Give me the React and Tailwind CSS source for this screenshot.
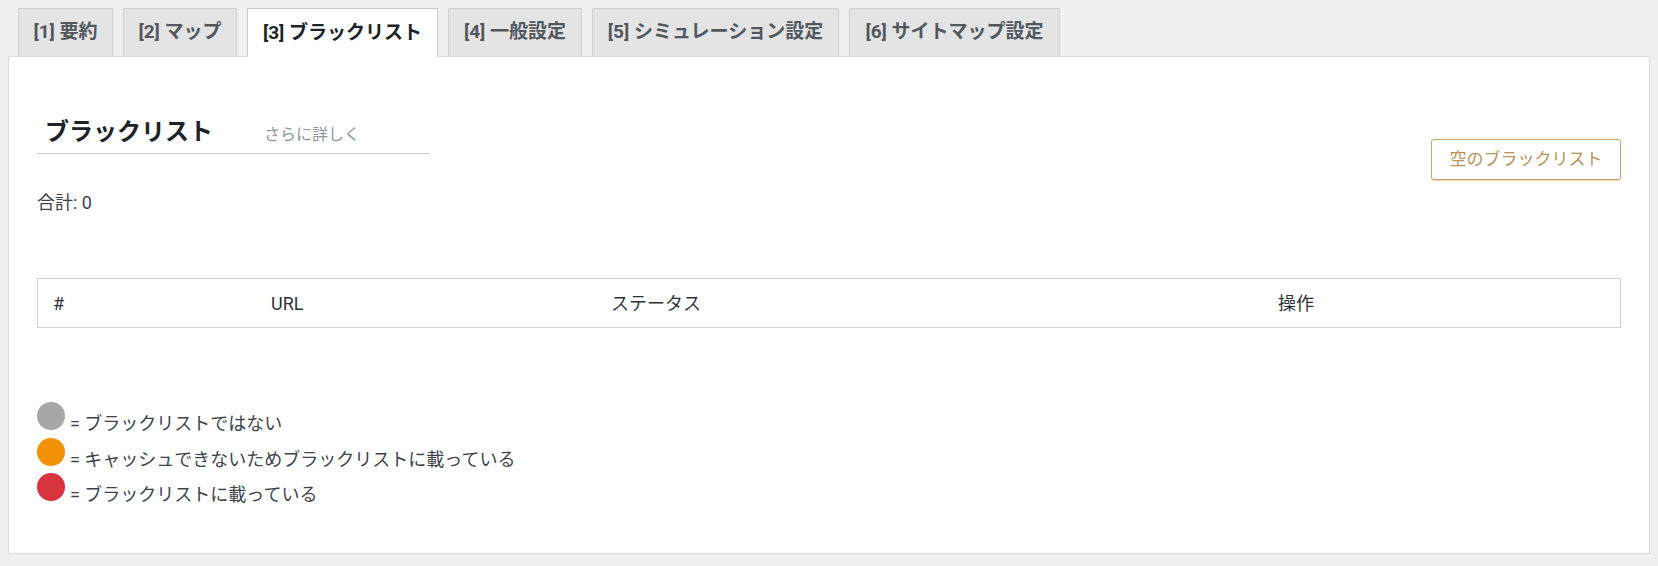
import React from "react";

const TABS = [
  { label: "[1] 要約", w: "w-[95px]" },
  { label: "[2] マップ", w: "w-[114px]" },
  { label: "[3] ブラックリスト", w: "w-[191px]", active: true },
  { label: "[4] 一般設定", w: "w-[134px]" },
  { label: "[5] シミュレーション設定", w: "w-[247px]" },
  { label: "[6] サイトマップ設定", w: "w-[211px]" },
];

const LEGEND = [
  { color: "bg-[#a7a7a7]", text: "= ブラックリストではない" },
  { color: "bg-[#f39106]", text: "= キャッシュできないためブラックリストに載っている" },
  { color: "bg-[#d8343f]", text: "= ブラックリストに載っている" },
];

const Tab = ({ label, w, active }) => (
  <div
    className={
      active
        ? `${w} h-[49px] relative z-10 flex items-center justify-center bg-white border border-b-0 border-[#c8c8c8] text-[19px] font-bold text-[#1d2327]`
        : `${w} h-12 flex items-center justify-center bg-[#e4e4e4] border border-b-0 border-[#cfcfcf] text-[19px] font-bold text-[#50575e]`
    }
  >
    {label}
  </div>
);

const App = () => {
  return (
    <div className="min-h-screen bg-[#f0f0f0] px-2 pt-2 pb-[13px] font-['Roboto','Noto_Sans_CJK_JP',sans-serif]">
      {/* Tabs */}
      <div className="flex items-start gap-[10px] pl-[10px] h-12">
        {TABS.map((t) => (
          <Tab key={t.label} {...t} />
        ))}
      </div>

      {/* Panel */}
      <div className="bg-white border border-[#dcdcdc] pl-[28px] pr-[28px] pb-[44px]">
        <div className="flex justify-between items-start">
          <div className="mt-[57px] w-[393px] flex items-baseline border-b border-[#cfcfcf] pb-[3px]">
            <h2 className="pl-2 text-[24px] leading-[36px] font-bold text-[#1d2327]">ブラックリスト</h2>
            <a className="ml-[51px] text-[16px] text-[#8a979c]">さらに詳しく</a>
          </div>
          <button className="mt-[82px] w-[190px] h-[41px] flex items-center justify-center rounded-[3px] border border-[#c9a46c] bg-white text-[17px] text-[#b8935a] shadow-[0_1px_1px_#f1d6ae]">
            空のブラックリスト
          </button>
        </div>

        <p className="mt-[9px] text-[18px] leading-[27px] text-[#3c434a]">合計: 0</p>

        {/* Table */}
        <div className="mt-[62px] border border-[#d2d2d2] grid grid-cols-[218px_340px_667px_1fr] h-[50px] items-center text-[18px] text-[#2c3338]">
          <div className="pl-[15px]">#</div>
          <div className="pl-[15px]">URL</div>
          <div className="pl-[15px]">ステータス</div>
          <div className="pl-[15px]">操作</div>
        </div>

        {/* Legend */}
        <div className="mt-[74px] flex flex-col">
          {LEGEND.map((l) => (
            <div key={l.text} className="h-[35.5px] flex items-baseline">
              <span className={`w-7 h-7 rounded-full ${l.color}`} />
              <span className="ml-[5px] text-[18px] leading-[24px] text-[#3c434a]">{l.text}</span>
            </div>
          ))}
        </div>
      </div>
    </div>
  );
};

export default App;
